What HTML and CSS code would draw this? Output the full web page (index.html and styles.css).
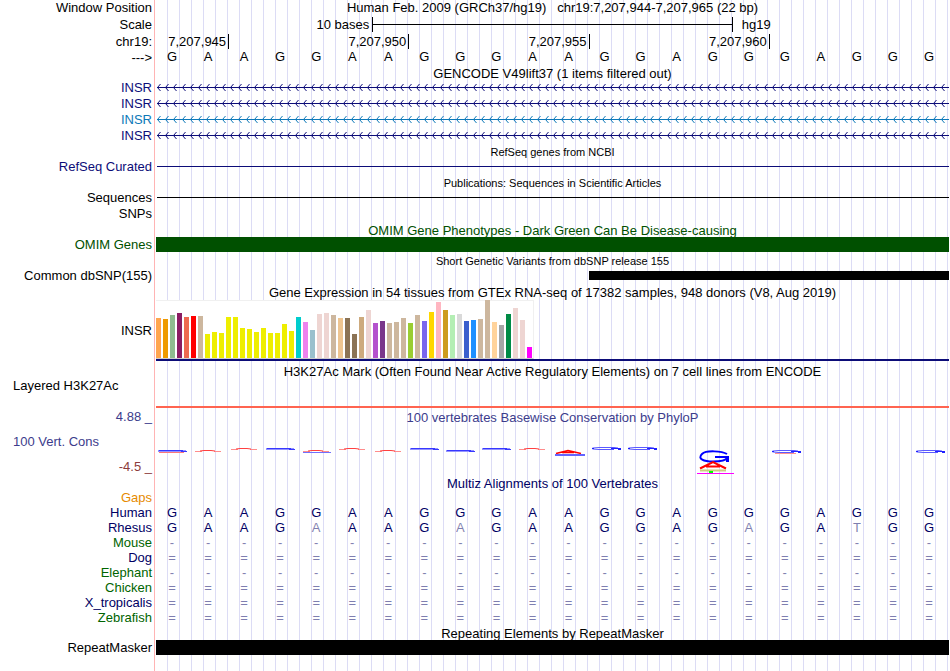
FILE: index.html
```html
<!DOCTYPE html>
<html lang="en">
<head>
<meta charset="utf-8">
<title>Genome Browser - chr19:7,207,944-7,207,965</title>
<link rel="stylesheet" href="styles.css">
</head>
<body>
<svg class="defs" aria-hidden="true">
  <defs>
    <g id="chevrons" fill="none">
      <path d="M3.500 4l-3 3.500l3 3.500M11.500 4l-3 3.500l3 3.500M19.500 4l-3 3.500l3 3.500M28.500 4l-3 3.500l3 3.500M36.500 4l-3 3.500l3 3.500M44.500 4l-3 3.500l3 3.500M52.500 4l-3 3.500l3 3.500M60.500 4l-3 3.500l3 3.500M68.500 4l-3 3.500l3 3.500M76.500 4l-3 3.500l3 3.500M84.500 4l-3 3.500l3 3.500M92.500 4l-3 3.500l3 3.500"/>
    </g>
    <pattern id="strand-navy" width="97" height="16" patternUnits="userSpaceOnUse"><use href="#chevrons" stroke="#0c0c78"/></pattern>
    <pattern id="strand-blue" width="97" height="16" patternUnits="userSpaceOnUse"><use href="#chevrons" stroke="#0c78b8"/></pattern>
  </defs>
</svg>
<main class="browser">
  <div class="row heading"><div class="label">Window Position</div><div class="data title">Human Feb. 2009 (GRCh37/hg19) &nbsp; chr19:7,207,944-7,207,965 (22 bp)</div></div>
  <div class="row scale-row"><div class="label">Scale</div>
    <div class="data cells"><span class="scale-text">10 bases</span><span class="scale-bar"></span><span class="scale-db">hg19</span></div></div>
  <div class="row"><div class="label">chr19:</div>
    <div class="data cells"><span class="tick tick-1">7,207,945</span><span class="tick tick-2">7,207,950</span><span class="tick tick-3">7,207,955</span><span class="tick tick-4">7,207,960</span></div></div>
  <div class="row short ruler"><div class="label">---&gt;</div><div class="data cells bases" data-bases="GAAGGAAGGGAAGGAGGGAGGG"></div></div>

  <div class="row short"><div class="data title">GENCODE V49lift37 (1 items filtered out)</div></div>
  <div class="row navy"><div class="label">INSR</div><div class="data"><svg class="strand"><rect class="arrows-navy"/></svg></div></div>
  <div class="row navy"><div class="label">INSR</div><div class="data"><svg class="strand"><rect class="arrows-navy"/></svg></div></div>
  <div class="row blue"><div class="label">INSR</div><div class="data"><svg class="strand"><rect class="arrows-blue"/></svg></div></div>
  <div class="row navy"><div class="label">INSR</div><div class="data"><svg class="strand"><rect class="arrows-navy"/></svg></div></div>

  <div class="row short"><div class="data title small">RefSeq genes from NCBI</div></div>
  <div class="row navy"><div class="label">RefSeq Curated</div><div class="data"><div class="strand"></div></div></div>

  <div class="row short"><div class="data title small">Publications: Sequences in Scientific Articles</div></div>
  <div class="row"><div class="label">Sequences</div><div class="data"><div class="strand"></div></div></div>
  <div class="row"><div class="label">SNPs</div></div>

  <div class="row short green"><div class="data title">OMIM Gene Phenotypes - Dark Green Can Be Disease-causing</div></div>
  <div class="row green"><div class="label">OMIM Genes</div><div class="data"><div class="block"></div></div></div>

  <div class="row short"><div class="data title small">Short Genetic Variants from dbSNP release 155</div></div>
  <div class="row"><div class="label">Common dbSNP(155)</div><div class="data cells"><div class="variant"></div></div></div>

  <div class="row"><div class="data title">Gene Expression in 54 tissues from GTEx RNA-seq of 17382 samples, 948 donors (V8, Aug 2019)</div></div>
  <div class="row tall"><div class="label">INSR</div><div class="data expression"><div class="bars"></div></div></div>

  <div class="row tall histone"><div class="label">Layered H3K27Ac</div><div class="data"><div class="title">H3K27Ac Mark (Often Found Near Active Regulatory Elements) on 7 cell lines from ENCODE</div></div></div>

  <div class="row tall phylop">
    <div class="label"><span>4.88 _</span><span class="name">100 Vert. Cons</span><span class="low">-4.5 _</span></div>
    <div class="data"><div class="title">100 vertebrates Basewise Conservation by PhyloP</div><div class="cells logos"></div></div>
  </div>

  <div class="row short deep"><div class="data title">Multiz Alignments of 100 Vertebrates</div></div>
  <div class="row short orange"><div class="label">Gaps</div></div>
  <div class="row short deep"><div class="label">Human</div><div class="data cells bases" data-bases="GAAGGAAGGGAAGGAGGGAGGG"></div></div>
  <div class="row short deep"><div class="label">Rhesus</div><div class="data cells bases" data-bases="GAAGaAAGaGAAGGAGaGAtGG"></div></div>
  <div class="row short leaf"><div class="label">Mouse</div><div class="data cells bases" data-bases="----------------------"></div></div>
  <div class="row short deep"><div class="label">Dog</div><div class="data cells bases" data-bases="======================"></div></div>
  <div class="row short leaf"><div class="label">Elephant</div><div class="data cells bases" data-bases="----------------------"></div></div>
  <div class="row short leaf"><div class="label">Chicken</div><div class="data cells bases" data-bases="======================"></div></div>
  <div class="row short deep"><div class="label">X_tropicalis</div><div class="data cells bases" data-bases="======================"></div></div>
  <div class="row short leaf"><div class="label">Zebrafish</div><div class="data cells bases" data-bases="======================"></div></div>

  <div class="row short"><div class="data title">Repeating Elements by RepeatMasker</div></div>
  <div class="row short"><div class="label">RepeatMasker</div><div class="data"><div class="block"></div></div></div>
</main>
<script src="script.js"></script>
</body>
</html>
```
FILE: styles.css
```css
* { box-sizing: border-box; }

body {
  margin: 0;
  background: #fff;
  color: #000;
  font: 13px/15px "Liberation Sans", Arial, sans-serif;
}

.defs { position: absolute; width: 0; height: 0; }

.browser {
  min-height: 100vh;
  overflow: hidden;
  background:
    linear-gradient(#ffb4b4, #ffb4b4) 154px 0 / 1px 100% no-repeat,
    repeating-linear-gradient(to right, #dcdcf5 0 1px, transparent 1px 12px) 167px 0 / 100% 100% no-repeat;
}

/* Each track line: label column, then the data window */
.row {
  display: grid;
  grid-template-columns: 154px minmax(0, 1fr);
  height: 16px;
}
.row.short { height: 15px; }
.row.scale-row { height: 18px; }
.row.tall { height: auto; }

.label {
  padding-right: 2px;
  text-align: right;
  white-space: nowrap;
}
.data {
  grid-column: 2;
  padding: 0 1px 0 2px;
}
.title {
  text-align: center;
  white-space: nowrap;
  line-height: 17px;
}
.heading .title { line-height: 15px; }
.heading .label, .scale-row .label, .ruler .label { line-height: 16px; }
.scale-row .label, .tall .label { align-self: center; }
.small { font-size: 11px; }

.navy { color: #0c0c78; }
.blue { color: #0c78b8; }
.green { color: #005000; }
.deep { color: #000064; }
.leaf { color: #006400; }
.orange { color: #e68a00; }

.cells {
  display: grid;
  grid-template-columns: repeat(22, minmax(0, 1fr));
}

/* Scale and coordinates */
.scale-text {
  grid-column: 1 / 7;
  padding-right: 3px;
  text-align: right;
  line-height: 18px;
}
.scale-bar {
  grid-column: 7 / 17;
  height: 15px;
  margin-top: 1px;
  border: solid #000;
  border-width: 0 1px;
  background: linear-gradient(#000, #000) 0 7px / 100% 1px no-repeat;
}
.scale-db {
  grid-column: 17 / 20;
  padding-left: 9px;
  line-height: 18px;
}
.tick {
  height: 15px;
  margin-right: -1px;
  padding-right: 2px;
  border-right: 1px solid #000;
  text-align: right;
  line-height: 16px;
}
.tick-1 { grid-column: 1 / 3; }
.tick-2 { grid-column: 6 / 8; }
.tick-3 { grid-column: 11 / 13; }
.tick-4 { grid-column: 16 / 18; }

.bases {
  padding: 0 3px 0 0;
  text-align: center;
}
.ruler .bases { line-height: 13px; }
.mismatch { opacity: 0.5; }

/* Track items */
.strand {
  display: block;
  width: calc(100% - 1px);
  height: 16px;
  margin-left: 1px;
  background: linear-gradient(currentColor, currentColor) 0 7px / 100% 1px no-repeat;
}
.strand rect { width: 100%; height: 100%; }
.arrows-navy { fill: url(#strand-navy); }
.arrows-blue { fill: url(#strand-blue); }
.block { height: 15px; background: currentColor; }
.variant {
  grid-column: 13 / 23;
  height: 9px;
  margin-top: 3px;
  background: #000;
}

.bars {
  display: flex;
  align-items: flex-end;
  gap: 2px;
  width: 378px;
  height: 59px;
  background: #fff;
  border: solid #f0f0f0;
  border-width: 1px 1px 0 0;
  border-bottom: 1px solid #ccc;
}
.bars span { flex: 0 0 5px; }
.expression::after {
  content: "";
  display: block;
  height: 2px;
  background: #0c0c78;
}

.row.histone .label {
  align-self: start;
  padding: 17px 0 0 13px;
  text-align: left;
}
.histone .data {
  height: 47px;
  background: linear-gradient(#ff6450, #ff6450) 2px 100% / calc(100% - 3px) 2px no-repeat;
}
.tall .title { line-height: 22px; }

.phylop { color: #3c3c8c; }
.phylop .label {
  display: flex;
  flex-direction: column;
  justify-content: space-between;
  height: 65px;
}
.phylop .name { padding-left: 13px; text-align: left; }
.phylop .low { color: #8c3c3c; }
.row.phylop .title { line-height: 20px; }
.logos { margin: 12px 2px 0 -2px; }
.logos svg {
  display: block;
  width: 36px;
  height: 35px;
  overflow: visible;
  fill: none;
}
```
FILE: script.js
```js
document.querySelectorAll('.bases').forEach(function (row) {
  row.dataset.bases.split('').forEach(function (base) {
    var cell = document.createElement('span');
    cell.textContent = base.toUpperCase();
    if (/[at=-]/.test(base)) cell.className = 'mismatch';
    if (/[=-]/.test(base)) cell.style.color = '#000064';
    row.appendChild(cell);
  });
});

// GTEx tissues: [height, colour]
var tissues = [
  [40, '#ffa54f'], [39, '#ee9a00'], [43, '#8fbc8f'], [45, '#8b1c62'], [41, '#ee6a50'], [42, '#ff0000'], [42, '#cdb79e'],
  [24, '#eeee00'], [26, '#eeee00'], [25, '#eeee00'], [41, '#eeee00'], [41, '#eeee00'], [30, '#eeee00'], [29, '#eeee00'],
  [26, '#eeee00'], [30, '#eeee00'], [25, '#eeee00'], [25, '#eeee00'], [34, '#eeee00'], [27, '#eeee00'],
  [41, '#00cdcd'], [36, '#ee82ee'], [28, '#9ac0cd'], [44, '#eed5d2'], [45, '#eed5d2'], [43, '#cdb79e'], [40, '#eec591'],
  [40, '#8b7355'], [24, '#8b7355'], [41, '#cdaa7d'], [48, '#eed5d2'], [35, '#b452cd'], [37, '#7a378b'], [35, '#cdb79e'],
  [36, '#cdb79e'], [40, '#cdb79e'], [35, '#9acd32'], [43, '#cdb79e'], [37, '#7a67ee'], [46, '#ffd700'], [56, '#ffb6c1'],
  [48, '#cd9b1d'], [43, '#b4eeb4'], [44, '#d9d9d9'], [37, '#3a5fcd'], [38, '#1e90ff'], [39, '#cdb79e'], [58, '#cdb79e'],
  [36, '#ffd39b'], [33, '#a6a6a6'], [44, '#008b45'], [50, '#eed5d2'], [38, '#eed5d2'], [11, '#ff00ff']
];
var bars = document.querySelector('.bars');
tissues.forEach(function (tissue) {
  var bar = document.createElement('span');
  bar.style.height = tissue[0] + 'px';
  bar.style.background = tissue[1];
  bars.appendChild(bar);
});

// Conservation marks, one drawing per base; y = 0 is the top of the drawing
function flatBlue(y) {
  return '<path d="M4 ' + (y + 1) + 'h28" stroke="#9494ff" stroke-width="2"/><path d="M5 ' + (y + 0.5) + 'h24M27 ' + (y + 1.5) + 'h6" stroke="#3838ff"/>';
}
function flatRed(y) {
  return '<path d="M5 ' + (y + 1.5) + 'h7M24 ' + (y + 1.5) + 'h7" stroke="#ff8c8c"/><path d="M10 ' + (y + 1) + 'l4 -.5h7l4 .5" stroke="#ff4040"/>';
}
function ringBlue(y) {
  return '<path d="M31 ' + (y + 1) + 'L27 ' + (y + 0.5) + 'H12L6 ' + (y + 1) + 'Q4 ' + (y + 1.5) + ' 6 ' + (y + 2) + 'L12 ' + (y + 2.5) + 'H27" stroke="#5a5aff"/>' +
    '<path d="M24 ' + (y + 1.5) + 'H34M31 ' + (y + 2.5) + 'h3M5 ' + (y + 1.5) + 'h2" stroke="#2020ff"/>';
}
var marks = {
  0: flatBlue(10) + '<path d="M5 12.500h25" stroke="#ff7878"/>',
  1: flatRed(10), 2: flatRed(8), 3: flatBlue(8),
  4: flatRed(10) + '<path d="M5 12.500h28" stroke="#7070ff"/>',
  5: flatRed(8), 6: flatRed(10), 7: flatBlue(8), 8: flatBlue(10), 9: flatBlue(8), 10: flatRed(8),
  11: '<path d="M5 13.500L17 10.500L30 13.500M11 12.500h12" stroke="#f00" stroke-width="1.500"/><path d="M4 15h30" stroke="#6464ff" stroke-width="2"/>',
  12: ringBlue(7), 13: ringBlue(7),
  15: '<path d="M32 14C27 11 11 10 7 14C2 19 9 21.500 18 21.500C26 21.500 31 20 32 18M20 17H33" stroke="#00f" stroke-width="2"/>' +
      '<path d="M32.500 16V22" stroke="#00f" stroke-width="3"/>' +
      '<path d="M5 28.500L18 22L31 28.500M11 26.500h14" stroke="#f00" stroke-width="2"/>' +
      '<path d="M5 30.500h26" stroke="#cccc80" stroke-width="2"/><path d="M14 32h4" stroke="#0f0" stroke-width="2"/>' +
      '<path d="M2 33.500h37" stroke="#f0f"/>',
  17: ringBlue(10) + '<path d="M8 13.500h21" stroke="#ff9090"/>',
  21: ringBlue(10)
};
var logos = document.querySelector('.logos');
for (var i = 0; i < 22; i++) {
  var slot = document.createElement('div');
  if (marks[i]) slot.innerHTML = '<svg viewBox="0 0 36 35">' + marks[i] + '</svg>';
  logos.appendChild(slot);
}
```
